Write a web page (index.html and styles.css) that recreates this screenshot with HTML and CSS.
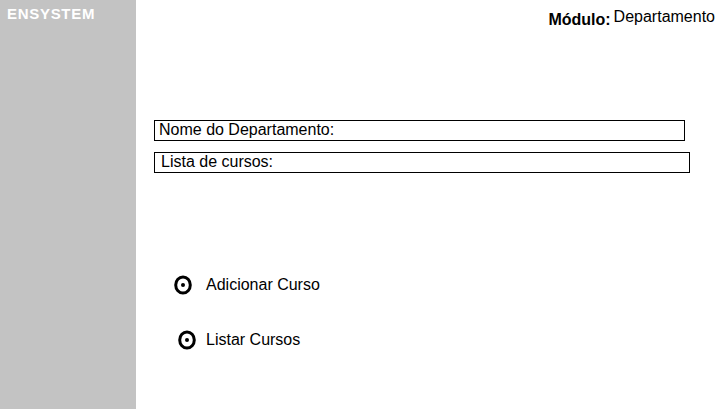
FILE: index.html
```html
<!DOCTYPE html>
<html>
<head>
<meta charset="utf-8">
<link rel="stylesheet" href="styles.css">
</head>
<body>
<div class="page">
  <aside class="sidebar">
    <div class="brand">ENSYSTEM</div>
  </aside>
  <main class="main">
    <header class="header">
      <span class="mod-label">Módulo:</span>
      <span class="mod-name">Departamento</span>
    </header>
    <div class="fields">
      <div class="field field-name">Nome do Departamento:</div>
      <div class="field field-list">Lista de cursos:</div>
    </div>
    <ul class="actions">
      <li class="action action-add">
        <svg class="icon" width="20" height="20" viewBox="0 0 20 20"><ellipse cx="10" cy="10" rx="7.3" ry="8" fill="none" stroke="#000" stroke-width="3"/><circle cx="10" cy="10" r="2" fill="#000"/></svg>
        <span>Adicionar Curso</span>
      </li>
      <li class="action action-list">
        <svg class="icon" width="20" height="20" viewBox="0 0 20 20"><ellipse cx="10" cy="10" rx="7.3" ry="8" fill="none" stroke="#000" stroke-width="3"/><circle cx="10" cy="10" r="2" fill="#000"/></svg>
        <span>Listar Cursos</span>
      </li>
    </ul>
  </main>
</div>
</body>
</html>
```

FILE: styles.css
```css
html, body {
  margin: 0;
  padding: 0;
  background: #fff;
  font-family: "Liberation Sans", Arial, sans-serif;
  color: #000;
}
.page {
  display: flex;
  width: 725px;
  height: 409px;
  overflow: hidden;
}
.sidebar {
  width: 136px;
  flex: none;
  background: #c3c3c3;
}
.brand {
  color: #fff;
  font-weight: bold;
  font-size: 15px;
  padding: 5px 0 0 7px;
  letter-spacing: 0.7px;
}
.main {
  flex: 1;
  display: flex;
  flex-direction: column;
}
.header {
  display: flex;
  justify-content: flex-end;
  align-items: flex-start;
  padding: 8px 10px 0 0;
  gap: 3px;
}
.mod-label {
  font-weight: bold;
  font-size: 16px;
  padding-top: 3px;
}
.mod-name {
  font-size: 16px;
}
.fields {
  display: flex;
  flex-direction: column;
  gap: 11px;
  margin: 91px 0 0 18px;
}
.field {
  border: 1px solid #000;
  box-sizing: border-box;
  height: 21px;
  font-size: 16px;
  line-height: 17px;
}
.field-name {
  width: 531px;
  padding-left: 4px;
}
.field-list {
  width: 536px;
  padding-left: 6px;
}
.actions {
  list-style: none;
  margin: 102px 0 0 0;
  padding: 0;
  display: flex;
  flex-direction: column;
  gap: 35px;
}
.action {
  display: flex;
  align-items: center;
  font-size: 16px;
  height: 20px;
}
.action-add {
  padding-left: 37px;
  gap: 13px;
}
.action-list {
  padding-left: 41px;
  gap: 9px;
}
.icon {
  flex: none;
}
```
